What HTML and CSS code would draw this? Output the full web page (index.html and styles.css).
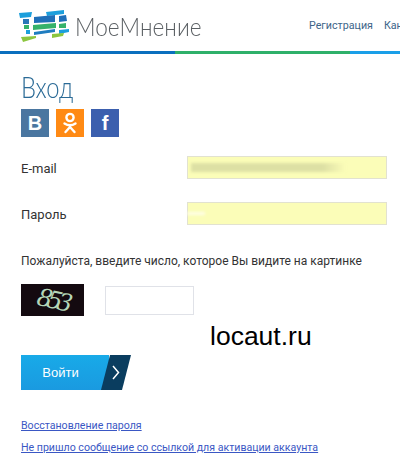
FILE: index.html
```html
<!DOCTYPE html>
<html lang="ru">
<head>
    <meta charset="UTF-8">
    <meta name="viewport" content="width=device-width, initial-scale=1.0">
    <title>МоеМнение - Вход</title>
    <link rel="stylesheet" href="styles.css">
</head>
<body>
    <header class="header">
        <a class="logo" href="#">
            <svg class="logo-mark" width="51" height="32" viewBox="18 9 51 32">
                <polygon fill="#1c9fdc" points="19,12 32,11 31,16 20,17"/>
                <polygon fill="#2a76b8" points="23,18 29,18 29,23 23,23"/>
                <polygon fill="#35b26a" points="24,24 29,24 29,28 24,28"/>
                <polygon fill="#1c9fdc" points="26,29 30,29 30,33 26,33"/>
                <polygon fill="#1c9fdc" points="46,11 64,9 64,13 47,15"/>
                <polygon fill="#1f6fb8" points="34,16 55,14 55,21 34,22"/>
                <polygon fill="#35b26a" points="33,24 56,22 56,27 33,29"/>
                <polygon fill="#1f7dc0" points="34,31 55,28 55,31 34,34"/>
                <polygon fill="#1f6fb8" points="59,15 66,14 67,20 59,21"/>
                <polygon fill="#35b26a" points="59,23 66,22 66,27 59,27"/>
                <polygon fill="#1c9fdc" points="59,29 69,28 69,31 59,33"/>
                <polygon fill="#8cc63f" points="21,36 36,35 36,37 23,41"/>
                <polygon fill="#8cc63f" points="52,33 64,32 63,35 52,37"/>
            </svg>
            <span class="logo-text">МоеМнение</span>
        </a>
        <nav class="nav">
            <a href="#">Регистрация</a>
            <a href="#">Кан</a>
        </nav>
    </header>
    <div class="stripe"></div>

    <main class="content">
        <h1 class="title">Вход</h1>
        <div class="social">
            <a class="social-btn vk" href="#">B</a>
            <a class="social-btn ok" href="#">
                <svg width="16" height="22" viewBox="0 0 16 22" fill="none" stroke="#fff" stroke-width="2.4" stroke-linecap="round">
                    <circle cx="8" cy="5.5" r="3.6"/>
                    <path d="M2.5 11.5c3.4 2.2 7.6 2.2 11 0"/>
                    <path d="M8 13.5v1.5M8 15l-4.5 5M8 15l4.5 5"/>
                </svg>
            </a>
            <a class="social-btn fb" href="#">f</a>
        </div>

        <div class="form-row">
            <label class="form-label">E-mail</label>
            <div class="field"><span class="blur-email"></span></div>
        </div>
        <div class="form-row">
            <label class="form-label">Пароль</label>
            <div class="field"><span class="blur-pass"></span></div>
        </div>

        <p class="captcha-hint">Пожалуйста, введите число, которое Вы видите на картинке</p>
        <div class="captcha-row">
            <div class="captcha-img"><span>853</span></div>
            <div class="captcha-input"></div>
        </div>

        <a class="login-btn" href="#">
            <span class="login-text">Войти</span>
            <span class="login-arrow">
                <svg width="8" height="15" viewBox="0 0 8 15" fill="none" stroke="#fff" stroke-width="1.5"><path d="M1 1l5.5 6.5L1 14"/></svg>
            </span>
        </a>

        <div class="links">
            <a href="#">Восстановление пароля</a>
            <a href="#">Не пришло сообщение со ссылкой для активации аккаунта</a>
        </div>
    </main>

    <div class="watermark">locaut.ru</div>
</body>
</html>
```

FILE: styles.css
```css
html, body {
    margin: 0;
    padding: 0;
}
body {
    position: relative;
    width: 400px;
    height: 462px;
    overflow: hidden;
    background: #fff;
    font-family: Roboto, sans-serif;
    color: #333;
}
a {
    text-decoration: none;
}
.header {
    display: flex;
    align-items: center;
    justify-content: space-between;
    height: 51px;
    white-space: nowrap;
}
.logo {
    display: flex;
    align-items: center;
    gap: 6px;
    margin-left: 18px;
}
.logo-text {
    font-family: Lato, sans-serif;
    font-size: 25px;
    font-weight: 300;
    color: #5a5f63;
    transform: scaleX(0.905);
    transform-origin: left;
}
.nav {
    display: flex;
    gap: 11px;
    flex: none;
    width: 91px;
    font-size: 10.7px;
}
.nav a {
    color: #3d6488;
}
.stripe {
    height: 3px;
    background: linear-gradient(90deg, #0b6fbe 0, #0b6fbe 175px, #2fb06a 175px, #2fb06a 350px, #1a9fe8 350px);
}
.content {
    padding: 0 21px;
}
.title {
    margin: 18px 0 0;
    height: 37px;
    font-family: Lato, sans-serif;
    font-size: 29px;
    line-height: 29px;
    font-weight: 300;
    color: #2a6a96;
    transform: scaleX(0.82);
    transform-origin: left;
}
.social {
    display: flex;
    gap: 7px;
}
.social-btn {
    display: flex;
    align-items: center;
    justify-content: center;
    width: 28px;
    height: 28px;
    color: #fff;
    font-family: "Liberation Sans", sans-serif;
    font-weight: 700;
    font-size: 20px;
}
.vk {
    background: #4a76a0;
}
.ok {
    background: #ff8a14;
}
.fb {
    background: #3b5fae;
}
.form-row {
    display: flex;
    align-items: center;
    justify-content: space-between;
    height: 23px;
}
.social + .form-row {
    margin-top: 19px;
}
.form-row + .form-row {
    margin-top: 23px;
}
.form-label {
    margin-top: 2px;
    font-size: 13px;
}
.field {
    display: flex;
    align-items: center;
    box-sizing: border-box;
    width: 200px;
    height: 23px;
    margin-right: -8px;
    padding: 0 3px;
    background: #fbfdb8;
    border: 1px solid #e2e2d0;
}
.blur-email {
    width: 155px;
    height: 9px;
    background: linear-gradient(90deg, #dde0a4 85%, #fbfdb8);
    filter: blur(1.5px);
}
.blur-pass {
    width: 18px;
    height: 3px;
    margin-left: -4px;
    background: #fffde8;
    filter: blur(1.5px);
}
.captcha-hint {
    margin: 27px 0 0;
    font-size: 12px;
    line-height: 18px;
}
.captcha-row {
    display: flex;
    align-items: center;
    gap: 21px;
    margin-top: 14px;
}
.captcha-img {
    display: flex;
    align-items: center;
    justify-content: center;
    width: 63px;
    height: 32px;
    overflow: hidden;
    background: #140a10;
}
.captcha-img span {
    font-family: "DejaVu Serif", serif;
    font-style: italic;
    font-size: 24px;
    letter-spacing: -5px;
    color: #b5d6b8;
    transform: rotate(12deg);
}
.captcha-input {
    box-sizing: border-box;
    width: 89px;
    height: 29px;
    background: #fff;
    border: 1px solid #e0e2e8;
}
.login-btn {
    display: flex;
    width: 110px;
    height: 35px;
    margin-top: 39px;
}
.login-text {
    display: flex;
    align-items: center;
    justify-content: center;
    flex: none;
    width: 88px;
    padding-right: 9px;
    box-sizing: border-box;
    background: linear-gradient(180deg, #18aae8, #1a9ae0);
    color: #fff;
    font-family: "Liberation Sans", sans-serif;
    font-size: 13px;
}
.login-arrow {
    display: flex;
    align-items: center;
    justify-content: center;
    flex: none;
    width: 30px;
    margin-left: -8px;
    background: #0a3d5f;
    clip-path: polygon(30% 0, 100% 0, 70% 100%, 0 100%);
}
.links {
    display: flex;
    flex-direction: column;
    align-items: flex-start;
    gap: 9px;
    margin-top: 29px;
    font-size: 10.6px;
    line-height: 13px;
    white-space: nowrap;
}
.links a {
    color: #3a57c4;
    text-decoration: underline;
}
.watermark {
    position: absolute;
    left: 210px;
    top: 321px;
    font-family: "Liberation Sans", sans-serif;
    font-size: 26.5px;
    color: #000;
}
```
